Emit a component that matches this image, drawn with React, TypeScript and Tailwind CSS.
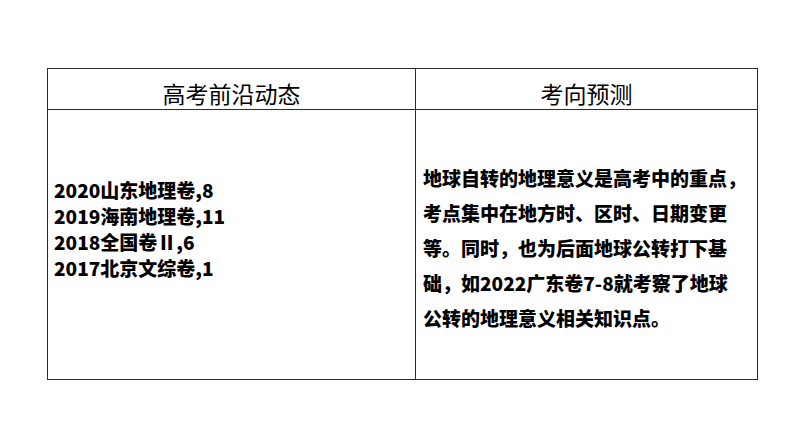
const font = { fontFamily: '"Microsoft YaHei", "Noto Sans CJK SC", "Noto Sans", sans-serif' }

const forecast = [
  "地球自转的地理意义是高考中的重点，",
  "考点集中在地方时、区时、日期变更",
  "等。同时，也为后面地球公转打下基",
  "础，如2022广东卷7-8就考察了地球",
  "公转的地理意义相关知识点。",
]

const papers = ["2020山东地理卷,8", "2019海南地理卷,11", "2018全国卷Ⅱ,6", "2017北京文综卷,1"]

export default function App() {
  return (
    <div className="w-[794px] h-[447px] bg-white pt-[68px] pl-[47px] text-black" style={font}>
      <div className="w-[711px] h-[312px] border border-[#2b2b2b] grid grid-cols-[368px_341px] grid-rows-[41px_1fr]">
        <div className="border-r border-b border-[#2b2b2b] flex items-center justify-center pt-[8px] text-[23px] leading-none">
          高考前沿动态
        </div>
        <div className="border-b border-[#2b2b2b] flex items-center justify-center pt-[8px] text-[23px] leading-none">
          考向预测
        </div>
        <div className="border-r border-[#2b2b2b] flex flex-col justify-center pl-[6px] pb-[31px] text-[19px] font-black leading-[26px]">
          {papers.map((p) => (
            <div key={p}>{p}</div>
          ))}
        </div>
        <div className="flex flex-col justify-center pl-[7px] pt-[6px] text-[19px] font-black leading-[35px] whitespace-nowrap">
          {forecast.map((l) => (
            <div key={l}>{l}</div>
          ))}
        </div>
      </div>
    </div>
  )
}
